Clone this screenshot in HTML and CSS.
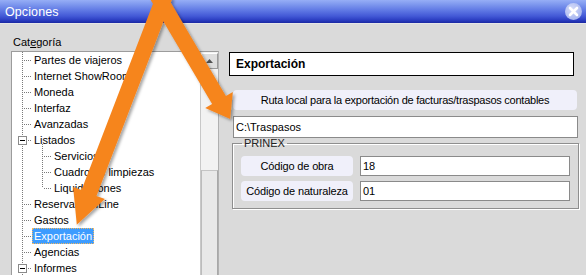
FILE: index.html
```html
<!DOCTYPE html>
<html lang="es">
<head>
<meta charset="utf-8">
<title>Opciones</title>
<link rel="stylesheet" href="styles.css">
</head>
<body>
<div class="window">
  <div class="titlebar">
    <span class="title">Opciones</span>
    <span class="close">
      <svg width="17" height="17" viewBox="0 0 17 17"><path d="M5 5 L12 12 M12 5 L5 12" stroke="#fff" stroke-width="2.6" stroke-linecap="round"/></svg>
    </span>
  </div>
  <div class="content">
    <div class="left">
      <div class="cat-label">Cat<u>e</u>goría</div>
      <div class="treebox">
        <div class="tree">
          <div class="node"><span class="label">Partes de viajeros</span></div>
          <div class="node"><span class="label">Internet ShowRoom</span></div>
          <div class="node"><span class="label">Moneda</span></div>
          <div class="node"><span class="label">Interfaz</span></div>
          <div class="node"><span class="label">Avanzadas</span></div>
          <div class="node"><span class="toggle"></span><span class="label">Listados</span></div>
          <div class="group">
            <div class="node l2"><span class="label">Servicios</span></div>
            <div class="node l2"><span class="label">Cuadro de limpiezas</span></div>
            <div class="node l2"><span class="label">Liquidaciones</span></div>
          </div>
          <div class="node"><span class="label">Reservas OnLine</span></div>
          <div class="node"><span class="label">Gastos</span></div>
          <div class="node"><span class="label selected">Exportación</span></div>
          <div class="node"><span class="label">Agencias</span></div>
          <div class="node"><span class="toggle"></span><span class="label">Informes</span></div>
        </div>
        <div class="scrollbar">
          <div class="sb-up"><svg width="7" height="4" viewBox="0 0 7 4"><path d="M0 4 L3.5 0 L7 4 Z" fill="#505050"/></svg></div>
          <div class="sb-track"></div>
          <div class="sb-thumb"></div>
        </div>
      </div>
    </div>
    <div class="right">
      <div class="section-title">Exportación</div>
      <div class="caption wide">Ruta local para la exportación de facturas/traspasos contables</div>
      <div class="input wide-input">C:\Traspasos</div>
      <fieldset class="group-box">
        <legend>PRINEX</legend>
        <div class="field-row">
          <div class="caption field-label">Código de obra</div>
          <div class="input field-input">18</div>
        </div>
        <div class="field-row">
          <div class="caption field-label">Código de naturaleza</div>
          <div class="input field-input">01</div>
        </div>
      </fieldset>
    </div>
  </div>
  <svg class="arrows" width="586" height="275" viewBox="0 0 586 275">
    <defs>
      <filter id="sh" x="-20%" y="-20%" width="140%" height="140%">
        <feDropShadow dx="2" dy="2" stdDeviation="1.5" flood-color="#000" flood-opacity="0.35"/>
      </filter>
    </defs>
    <g fill="#f6851f" filter="url(#sh)">
      <polygon points="157.5,-7.9 172.5,-2.1 96.5,195.9 104.9,199.1 76.8,224.8 73.1,186.9 81.5,190.1"/>
      <polygon points="150.1,-0.9 163.9,-9.1 225.9,95.9 232.8,91.9 230.2,118.9 205.2,108.1 212.1,104.1"/>
    </g>
  </svg>
</div>
</body>
</html>
```

FILE: styles.css
```css
html, body {
  margin: 0;
  padding: 0;
}
body {
  width: 586px;
  height: 275px;
  overflow: hidden;
  background: #dadada;
  font-family: "Liberation Sans", Arial, sans-serif;
  font-size: 11px;
  color: #000;
}
.window {
  position: relative;
  width: 586px;
  height: 275px;
  overflow: hidden;
  background: #dadada;
}
.titlebar {
  height: 24px;
  box-sizing: border-box;
  display: flex;
  align-items: center;
  justify-content: space-between;
  padding: 0 4px 0 5px;
  background: linear-gradient(to bottom, #96aef6 0%, #7d97ee 20%, #5f78e4 45%, #4359d6 70%, #2a3cc0 88%, #1a28a2 100%);
  border-bottom: 1px solid #e6e6e6;
}
.title {
  color: #fff;
  font-size: 12.5px;
  letter-spacing: 0.1px;
}
.close {
  width: 17px;
  height: 17px;
  border-radius: 50%;
  background: radial-gradient(circle at 40% 35%, #d6dcf8 0%, #b3c0f2 55%, #97a8ea 100%);
  display: flex;
}
.content {
  display: flex;
  padding-left: 11px;
}
.left {
  width: 208px;
  display: flex;
  flex-direction: column;
}
.cat-label {
  margin-top: 10px;
  margin-left: 2px;
  height: 16px;
  line-height: 16px;
}
.cat-label u {
  text-decoration-thickness: 1px;
}
.treebox {
  margin-top: 1px;
  height: 240px;
  display: flex;
  border: 1px solid #9c9c9c;
  border-right-color: #b0b0b0;
  background: #fff;
}
.tree {
  flex: 1;
  background-image: linear-gradient(to bottom, #7a7a7a 50%, transparent 50%);
  background-size: 1px 2px;
  background-position: 10px 0;
  background-repeat: repeat-y;
}
.node {
  position: relative;
  height: 16px;
  padding-left: 20px;
  display: flex;
  align-items: center;
}
.node::before {
  content: "";
  position: absolute;
  left: 11px;
  top: 8px;
  width: 9px;
  height: 1px;
  background-image: linear-gradient(to right, transparent 50%, #7a7a7a 50%);
  background-size: 2px 1px;
}
.node.l2 {
  padding-left: 40px;
}
.node.l2::before {
  left: 31px;
}
.group {
  position: relative;
}
.group::before {
  content: "";
  position: absolute;
  left: 30px;
  top: -4px;
  height: 44px;
  width: 1px;
  background-image: linear-gradient(to bottom, #7a7a7a 50%, transparent 50%);
  background-size: 1px 2px;
}
.toggle {
  position: absolute;
  left: 6px;
  top: 4px;
  width: 9px;
  height: 9px;
  box-sizing: border-box;
  border: 1px solid #8a8a8a;
  background: #fff;
  z-index: 1;
}
.toggle::after {
  content: "";
  position: absolute;
  left: 1px;
  top: 3px;
  width: 5px;
  height: 1px;
  background: #000;
}
.label {
  display: inline-block;
  height: 16px;
  line-height: 16px;
  padding: 0 2px;
  white-space: nowrap;
  box-sizing: border-box;
}
.label.selected {
  background: #3d9cff;
  color: #fff;
  line-height: 14px;
  height: 16px;
  border: 1px dotted #f2b860;
  padding: 0 1px;
}
.scrollbar {
  width: 17px;
  display: flex;
  flex-direction: column;
  border-left: 1px solid #c8c8c8;
  background: #f2f2f2;
}
.sb-up {
  height: 16px;
  box-sizing: border-box;
  margin-top: 1px;
  background: #dedede;
  border: 1px solid #fff;
  border-right-color: #9a9a9a;
  border-bottom-color: #9a9a9a;
  display: flex;
  align-items: center;
  justify-content: center;
}
.sb-track {
  height: 101px;
  background: #f2f2f2;
}
.sb-thumb {
  flex: 1;
  background: #e8e8e8;
  border: 1px solid #fff;
  border-left-color: #bcbcbc;
  border-right-color: #a8a8a8;
  border-top-color: #c4c4c4;
}
.right {
  margin-left: 10px;
  width: 348px;
  display: flex;
  flex-direction: column;
}
.section-title {
  margin-top: 28px;
  width: 345px;
  height: 24px;
  box-sizing: border-box;
  border: 1px solid #000;
  background: #fff;
  font-weight: bold;
  font-size: 12px;
  padding-left: 6px;
  display: flex;
  align-items: center;
}
.caption {
  background: #f0f0fa;
  border-radius: 4px;
  display: flex;
  align-items: center;
  justify-content: center;
  height: 20px;
  white-space: nowrap;
}
.caption.wide {
  margin-top: 14px;
  margin-left: 4px;
  width: 344px;
  letter-spacing: -0.25px;
}
.input {
  background: #fff;
  border: 1px solid #8a8a8a;
  box-sizing: border-box;
  padding-left: 2px;
  display: flex;
  align-items: center;
}
.wide-input {
  margin-top: 6px;
  margin-left: 4px;
  width: 345px;
  height: 22px;
}
.group-box {
  margin: -1px 0 0 3px;
  width: 346px;
  box-sizing: border-box;
  height: 72px;
  padding: 0 8px;
  border: 1px solid #8e8e8e;
  box-shadow: 1px 1px 0 #fff, inset 1px 1px 0 #fff;
  display: flex;
  flex-direction: column;
  gap: 5px;
}
.group-box legend {
  padding: 0 2px;
  margin-left: 1px;
  font-size: 11px;
  line-height: 13px;
  color: #222;
}
.field-row {
  display: flex;
  gap: 7px;
}
.group-box .field-row:first-of-type {
  margin-top: 6px;
}
.field-label {
  width: 112px;
  height: 20px;
  letter-spacing: -0.15px;
}
.field-input {
  width: 210px;
  height: 20px;
}
.arrows {
  position: absolute;
  left: 0;
  top: 0;
  pointer-events: none;
  overflow: visible;
}
```
